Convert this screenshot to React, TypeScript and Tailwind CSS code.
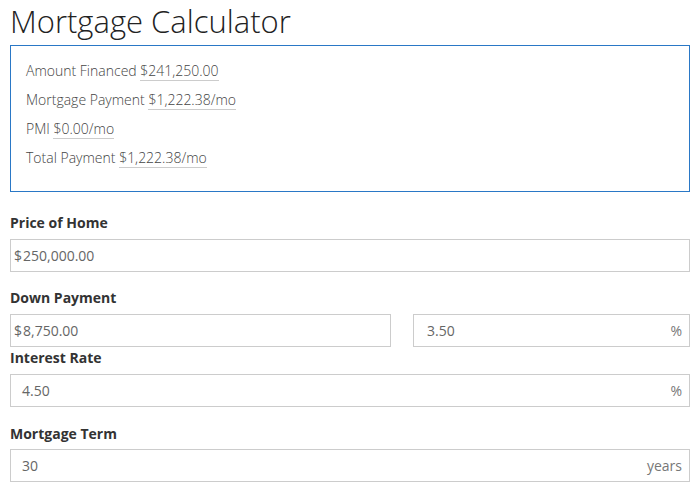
const Row = ({ label, value }: { label: string; value: string }) => (
  <p className="mb-[9px] leading-5">
    {label}{' '}
    <span className="border-b border-[#cccccc]">{value}</span>
  </p>
)

const Field = ({
  prefix,
  value,
  suffix,
  className = '',
}: {
  prefix?: string
  value: string
  suffix?: string
  className?: string
}) => (
  <div
    className={`flex h-[33px] items-center border border-[#cccccc] text-[14px] text-[#666666] ${
      prefix ? 'pl-[3px]' : 'pl-[11px]'
    } pr-[7px] ${className}`}
  >
    {prefix && <span className="mr-px">{prefix}</span>}
    <span className="flex-1">{value}</span>
    {suffix && <span className="text-[#777777]">{suffix}</span>}
  </div>
)

const App = () => {
  return (
    <div className="min-h-screen bg-white px-[10px] font-['Open_Sans',sans-serif]">
      <h1 className="pt-[1px] text-[31px] font-light leading-[40px] text-[#222222]">
        Mortgage Calculator
      </h1>

      <div className="mt-[4px] border border-[#2a78c6] px-[15px] pt-[15px] pb-[14px] text-[14px] font-light text-[#444444]">
        <Row label="Amount Financed" value="$241,250.00" />
        <Row label="Mortgage Payment" value="$1,222.38/mo" />
        <Row label="PMI" value="$0.00/mo" />
        <Row label="Total Payment" value="$1,222.38/mo" />
      </div>

      <label className="mt-[21px] block text-[14px] font-bold leading-5 text-[#333333]">
        Price of Home
      </label>
      <Field className="mt-[6px]" prefix="$" value="250,000.00" />

      <label className="mt-[16px] block text-[14px] font-bold leading-5 text-[#333333]">
        Down Payment
      </label>
      <div className="mt-[6px] flex gap-[22px]">
        <Field className="w-[381px]" prefix="$" value="8,750.00" />
        <Field className="flex-1 !pl-[13px]" value="3.50" suffix="%" />
      </div>

      <label className="mt-[1px] block text-[14px] font-bold leading-5 text-[#333333]">
        Interest Rate
      </label>
      <Field className="mt-[6px]" value="4.50" suffix="%" />

      <label className="mt-[17px] block text-[14px] font-bold leading-5 text-[#333333]">
        Mortgage Term
      </label>
      <Field className="mt-[5px]" value="30" suffix="years" />
    </div>
  )
}

export default App
